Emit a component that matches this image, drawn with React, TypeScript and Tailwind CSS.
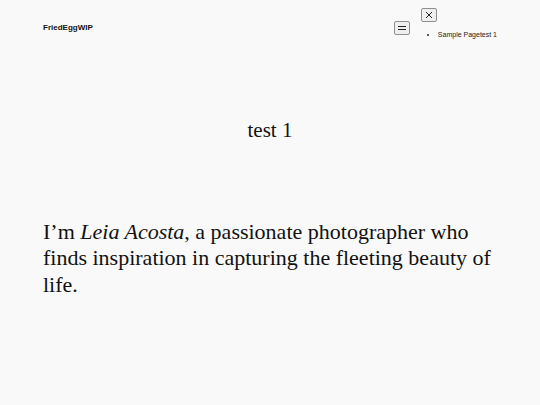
import React from 'react';

const App: React.FC = () => {
  return (
    <div className="min-h-screen bg-[#f9f9f9] text-[#111111]">
      <header className="flex items-start justify-between px-[43px] pt-2">
        <p className="mt-[15px] text-[8px] leading-[10px] font-bold font-['Liberation_Sans',Arial,sans-serif]">
          FriedEggWIP
        </p>
        <nav className="flex items-start">
          <button
            type="button"
            aria-label="Open menu"
            className="mt-[13px] flex h-[14px] w-[16px] items-center justify-center border border-[#8f8f8f] bg-[#efefef] rounded-[2px]"
          >
            <svg width="10" height="6" viewBox="0 0 10 6" fill="none" stroke="#222" strokeWidth="1">
              <path d="M1 1.5h8M1 4.5h8" />
            </svg>
          </button>
          <div className="ml-[11px] flex flex-col">
            <button
              type="button"
              aria-label="Close menu"
              className="flex h-[14px] w-[16px] items-center justify-center border border-[#8f8f8f] bg-[#efefef] rounded-[2px]"
            >
              <svg width="8" height="8" viewBox="0 0 8 8" fill="none" stroke="#222" strokeWidth="1">
                <path d="M1 1l6 6M7 1L1 7" />
              </svg>
            </button>
            <ul className="mt-[8px] list-disc pl-[17px] text-[7px] leading-[10px] font-medium text-[#222] font-['Liberation_Sans',Arial,sans-serif]">
              <li>
                <span>Sample Page</span>
                <span>test 1</span>
              </li>
            </ul>
          </div>
        </nav>
      </header>

      <main className="px-[43px] font-['Liberation_Serif','Times_New_Roman',serif]">
        <h1 className="mt-[78px] text-center text-[21px] leading-[25px] font-normal">test 1</h1>
        <p className="mt-[76px] text-[22px] leading-[26.4px]">
          I’m <em>Leia Acosta</em>, a passionate photographer who finds inspiration in capturing the fleeting
          beauty of life.
        </p>
      </main>
    </div>
  );
};

export default App;
